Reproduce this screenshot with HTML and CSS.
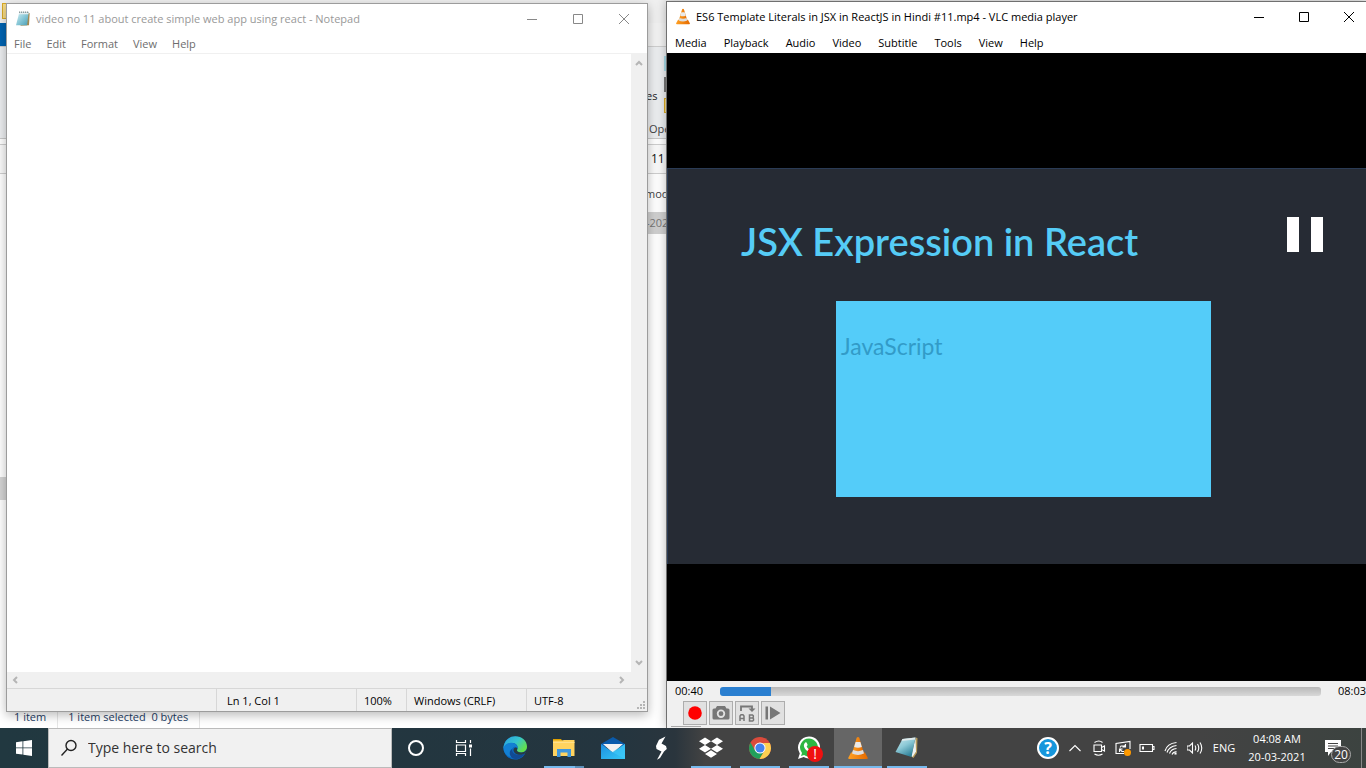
FILE: index.html
```html
<!DOCTYPE html>
<html lang="en">
<head>
<meta charset="utf-8">
<title>Desktop</title>
<link rel="stylesheet" href="styles.css">
</head>
<body>
<svg class="defs" aria-hidden="true">
  <defs>
    <linearGradient id="pad" x1="0" y1="0" x2="1" y2="1"><stop offset="0" stop-color="#d5f1f6"/><stop offset=".6" stop-color="#7cc0d1"/><stop offset="1" stop-color="#4b9cb3"/></linearGradient>
    <linearGradient id="pad2" x1="0" y1="0" x2=".6" y2="1"><stop offset="0" stop-color="#cfeaf0"/><stop offset=".5" stop-color="#8cc9d6"/><stop offset="1" stop-color="#2f8199"/></linearGradient>
    <linearGradient id="edge1" x1="0" y1="0" x2="1" y2=".6"><stop offset="0" stop-color="#2a9fe0"/><stop offset=".55" stop-color="#35c4cf"/><stop offset="1" stop-color="#63e04a"/></linearGradient>
    <linearGradient id="mail1" x1="0" y1="0" x2="1" y2="1"><stop offset="0" stop-color="#1d8fe0"/><stop offset="1" stop-color="#35c8f7"/></linearGradient>
    <linearGradient id="cone1" x1="0" y1="0" x2="1" y2="0"><stop offset="0" stop-color="#ffa022"/><stop offset="1" stop-color="#e46a00"/></linearGradient>
    <symbol id="cone" viewBox="0 0 24 26">
      <path d="M4.500 18h15l3 5.500q.4 1.500-1.200 1.500H2.700Q1.100 25 1.500 23.500Z" fill="url(#cone1)"/>
      <path d="M10.600 2q1.400-1.800 2.800 0l5.400 18q-6.800 4-13.600 0Z" fill="url(#cone1)"/>
      <path d="M9.400 6.500h5.200l1.600 5.300q-4.200 1.800-8.400 0Z" fill="#e9e9e9"/>
      <path d="M6.600 15.300q5.400 2.200 10.800 0l1.100 3.700q-6.500 3.200-13 0Z" fill="#dedede"/>
    </symbol>
    <symbol id="notepad" viewBox="0 0 24 24">
      <path d="M20 3l2 1-1 18-13 1Z" fill="#a38a52"/>
      <path d="M6.500 2.500h14L18 22H1.500Z" fill="url(#pad)"/>
      <path d="M6.500 2.500h14l-.4 3H5.700Z" fill="#e4eef0"/>
      <path d="M7 1.500v2M10 1.500v2M13 1.500v2M16 1.500v2M19 1.500v2" stroke="#4a5a5c" stroke-width="1.200"/>
    </symbol>
  </defs>
</svg>

<main class="desktop">
  <section class="explorer" aria-label="File Explorer">
    <div class="ex-title"><span class="ex-folder"></span></div>
    <div class="ex-tabs"></div>
    <div class="ex-ribbon"><span class="ex-es">es</span><span class="ex-icons"><i class="glass"></i><i class="grey"></i><i class="gold"></i></span><span class="ex-open">Open</span></div>
    <div class="ex-address">11</div>
    <div class="ex-head">mod</div>
    <div class="ex-row">-202</div>
    <div class="ex-list"><span class="ex-mark"></span></div>
    <footer class="ex-status"><span>1 item</span><span>1 item selected&nbsp; 0 bytes</span></footer>
  </section>

  <section class="window notepad" aria-label="Notepad">
    <header class="titlebar">
      <svg class="app-icon" viewBox="0 0 24 24"><use href="#notepad"/></svg>
      <h1 class="win-title">video no 11 about create simple web app using react - Notepad</h1>
      <div class="controls">
        <button aria-label="Minimize"><svg viewBox="0 0 12 12"><path d="M1 6.500h10"/></svg></button>
        <button aria-label="Maximize"><svg viewBox="0 0 12 12"><path d="M1.500 1.500h9v9h-9z"/></svg></button>
        <button aria-label="Close"><svg viewBox="0 0 12 12"><path d="M1 1l10 10M11 1L1 11"/></svg></button>
      </div>
    </header>
    <nav class="menu"><button>File</button><button>Edit</button><button>Format</button><button>View</button><button>Help</button></nav>
    <div class="editor">
      <textarea class="paper" aria-label="Text editor"></textarea>
      <div class="vscroll"><svg viewBox="0 0 8 6"><path d="M1 5l3-3 3 3"/></svg><svg viewBox="0 0 8 6"><path d="M1 1l3 3 3-3"/></svg></div>
      <div class="hscroll"><svg viewBox="0 0 6 8"><path d="M5 1L2 4l3 3"/></svg><svg viewBox="0 0 6 8"><path d="M1 1l3 3-3 3"/></svg></div>
    </div>
    <footer class="np-status">
      <span class="st-empty"></span><span class="st-pos">Ln 1, Col 1</span><span class="st-zoom">100%</span><span class="st-eol">Windows (CRLF)</span><span class="st-enc">UTF-8</span>
      <svg class="grip" viewBox="0 0 8 8"><path d="M6 0h2v2H6zM3 3h2v2H3zM6 3h2v2H6zM0 6h2v2H0zM3 6h2v2H3zM6 6h2v2H6z"/></svg>
    </footer>
  </section>

  <section class="window vlc" aria-label="VLC media player">
    <header class="titlebar">
      <svg class="app-icon" viewBox="0 0 24 26"><use href="#cone"/></svg>
      <h1 class="win-title">ES6 Template Literals in JSX in ReactJS in Hindi #11.mp4 - VLC media player</h1>
      <div class="controls">
        <button aria-label="Minimize"><svg viewBox="0 0 12 12"><path d="M1 6.500h10"/></svg></button>
        <button aria-label="Maximize"><svg viewBox="0 0 12 12"><path d="M1.500 1.500h9v9h-9z"/></svg></button>
        <button aria-label="Close"><svg viewBox="0 0 12 12"><path d="M1 1l10 10M11 1L1 11"/></svg></button>
      </div>
    </header>
    <nav class="menu"><button>Media</button><button>Playback</button><button>Audio</button><button>Video</button><button>Subtitle</button><button>Tools</button><button>View</button><button>Help</button></nav>
    <div class="video">
      <div class="slide">
        <h2 class="slide-title">JSX Expression in React</h2>
        <div class="slide-box">JavaScript</div>
        <div class="paused"><i></i><i></i></div>
      </div>
    </div>
    <footer class="player">
      <div class="seek"><span>00:40</span><input type="range" min="0" max="483" value="40" aria-label="Seek"><span>08:03</span></div>
      <div class="tools">
        <button aria-label="Record"><svg viewBox="0 0 22 22"><circle cx="11" cy="11" r="6.800" fill="#f00"/></svg></button>
        <button aria-label="Snapshot"><svg viewBox="0 0 22 22"><path fill="#777" fill-rule="evenodd" d="M7 4h8l1.500 2.500H18q1.500 0 1.500 1.500v8q0 1.500-1.500 1.500H4Q2.500 17.500 2.500 16V8Q2.500 6.500 4 6.500h1.500zM11 7.500a4.200 4.200 0 1 0 0 8.400 4.200 4.200 0 0 0 0-8.400zm0 1.800a2.400 2.400 0 1 1 0 4.800 2.400 2.400 0 0 1 0-4.800z"/></svg></button>
        <button aria-label="Loop from A to B"><svg viewBox="0 0 22 22"><path fill="none" stroke="#777" stroke-width="1.800" d="M5 9V4.500h11V7"/><path fill="#777" d="M12.500 6.500h7L16 10z"/><path fill="none" stroke="#777" stroke-width="1.500" d="M4 19v-5l1-1.200h2L8 14v5M4 16.500h4M13.500 13h3l.8.8v1.400l-.8.800h-3zM13.500 16h3.200l.8.800v1.400l-.8.800h-3.200z"/></svg></button>
        <button aria-label="Frame by frame"><svg viewBox="0 0 22 22"><path fill="#777" d="M3.500 4.500h2.500v13H3.500zM8 4.500l10.500 6.500L8 17.500z"/></svg></button>
      </div>
      <div class="player-edge"></div>
    </footer>
  </section>
</main>

<footer class="taskbar">
  <button class="start" aria-label="Start"><svg viewBox="0 0 16 16"><path fill="#fff" d="M0 2.200L6.500 1.300v6.200H0zM7.300 1.200L16 0v7.500H7.300zM0 8.300h6.500v6.200L0 13.700zM7.300 8.300H16V16l-8.700-1.200z"/></svg></button>
  <label class="search"><svg viewBox="0 0 18 18"><circle cx="11" cy="6.500" r="5" /><path d="M7.500 10L1.500 16.500"/></svg><input type="text" placeholder="Type here to search" aria-label="Type here to search"></label>
  <div class="quick">
    <button aria-label="Cortana"><svg viewBox="0 0 24 24"><circle cx="12" cy="12" r="7" fill="none" stroke="#fff" stroke-width="2"/></svg></button>
    <button aria-label="Task View"><svg viewBox="0 0 24 24" fill="none" stroke="#fff" stroke-width="1.200"><path d="M4.500 4v2.500h9V4M4.500 9h9v6.500h-9zM4.500 20v-2.500h9V20M18.500 4v3M18.500 12.500V20"/><path d="M17 8.500h3v3h-3z" fill="#fff" stroke="none"/></svg></button>
  </div>
  <div class="tasks">
    <button aria-label="Microsoft Edge"><svg viewBox="0 0 24 24"><circle cx="12" cy="12" r="11.500" fill="#0b66bd"/><path d="M.6 10.500C2 3.500 7 .3 12.300.3 19 .3 24 5 24 10.500c0 4-3 6-6.300 6-3 0-4.700-1-3.500-2.800C16 10 13 7 9.500 7 6 7 2.500 8.500.6 12.500Z" fill="url(#edge1)"/><path d="M.5 12C1.500 8.500 5 6.800 8 6.800c3.600 0 6.500 2.500 6.400 5.700-.5-1.500-2-2.300-3.500-1.600C7.500 12.500 8 18 12.500 20.500c-4 2.500-12-1-12-8.500Z" fill="#1380d3"/><path d="M9 13c-.5 5 6 8 12.800 4.500C18.500 24 9 25 7 19c-.7-2.500 0-5 2-6Z" fill="#114a93"/><path d="M14.400 12.500c-.4 1-.9 2 .4 3 2.500 1.800 7.500 1.200 9-2.500-.2 2-1 3.500-2 4.500-6 3-11 0-11.300-3.300 0-2.200 2.600-3.700 3.900-1.700Z" fill="#263a44"/></svg></button>
    <button class="open many" aria-label="File Explorer"><svg viewBox="0 0 24 24"><path d="M1 3h8l1.500 2H1z" fill="#e0a000"/><path d="M1 4.500h9L12 4h10.500v16H1z" fill="#ffd35f"/><path d="M1 6h21.500v1H1z" fill="#ffe08a"/><path d="M5 21v-8h14v8h-3.500v-4.500h-7V21z" fill="#3f97dd"/></svg></button>
    <button aria-label="Mail"><svg viewBox="0 0 24 24"><path d="M0 8L12 1l12 7v3H0z" fill="#0a5bab"/><path d="M2 8h20l-10 9z" fill="#f2f2f2"/><path d="M0 8l12 8.500L24 8v15H0z" fill="url(#mail1)"/><path d="M24 8v15L11 16z" fill="#41c9f8" opacity=".6"/></svg></button>
    <button aria-label="Shortcut app"><svg viewBox="0 0 24 24"><path fill="#fff" d="M15.500.5L9 3.800 6 10l.5 3 5 2.500-4.500 8.300 3-1.800 4-6.500 2.800-2.500-.8-3-4.500-2.500Z"/></svg></button>
    <button class="open" aria-label="Dropbox"><svg viewBox="0 0 24 24"><path fill="#fff" d="M6 1.500l6 3.700-6 3.700-6-3.700zM18 1.500l6 3.700-6 3.700-6-3.700zM6 9l6 3.700-6 3.700L0 12.700zM18 9l6 3.700-6 3.700-6-3.700zM12 14.300l6 3.700-6 3.800L6 18z"/></svg></button>
    <button class="open" aria-label="Google Chrome"><svg viewBox="0 0 24 24"><circle cx="12" cy="12" r="11" fill="#da4b3c"/><path d="M2.500 6.500A11 11 0 0 0 11.500 23l5-8.300-9.500-.200Z" fill="#21a05b"/><path d="M21.800 7A11 11 0 0 1 11.500 23l5-8.300c1.400-2.500.8-5.700-1.500-7.700Z" fill="#fdd052"/><circle cx="12" cy="12" r="5.600" fill="#fff"/><circle cx="12" cy="12" r="4.600" fill="#4482f0"/></svg></button>
    <button class="open wa" aria-label="WhatsApp"><svg viewBox="0 0 24 24"><path fill="#fff" d="M12 .5a11 11 0 1 1-5.300 20.600L1 23l1.800-5.600A11 11 0 0 1 12 .5Z"/><path fill="#2db742" d="M12 2.500a9 9 0 1 1-4.900 16.600L4 20.100l1-3.100A9 9 0 0 1 12 2.500Z"/><path fill="#fff" d="M8.300 6.500c.6-.4 1.200-.2 1.400.3l.9 2c.1.600-.8 1.200-.9 1.600.8 1.800 2.200 3 4 3.700.6-.200 1-1.300 1.600-1.200l2.200 1c.5.400 0 2-.8 2.600-1 .8-2.500.9-5-.4-2.500-1.400-4.200-3.700-4.700-5.500-.4-1.800.3-3.400 1.300-4.100Z"/></svg><span class="alert">!</span></button>
    <button class="open active" aria-label="VLC media player"><svg viewBox="0 0 24 26"><use href="#cone"/></svg></button>
    <button class="open" aria-label="Notepad"><svg viewBox="0 0 24 24"><path d="M21 1.500l1.500.8-.5 14.500-3.500 5.200-3-2Z" fill="#b59a5c"/><path d="M20.500 2l.5 13.500-3.500 5.500-1-1.500Z" fill="#eef2f2"/><path d="M7.500 3L20.500 1.500 16.500 21 .5 16Z" fill="url(#pad2)"/><path d="M7.500 3L20.500 1.500l-.5 2L6.500 5Z" fill="#dfe9ea"/></svg></button>
  </div>
  <div class="tray">
    <button class="help" aria-label="Help"><span>?</span></button>
    <button aria-label="Show hidden icons"><svg viewBox="0 0 16 16"><path d="M2.500 11L8 5.500l5.500 5.500"/></svg></button>
    <button aria-label="Meet Now"><svg viewBox="0 0 16 16"><path d="M3.500 2.500Q8-.5 11.500 2.500M3.500 14q4 2.500 8 0M3 5h7.500v6.500H3zM10.500 7.500l3-1.500v5l-3-1.500"/></svg></button>
    <button class="sync" aria-label="Updates"><svg viewBox="0 0 16 16"><path d="M9 13.500H1V3.500l14-2V9M5 7.500l1-1.500h3.500l1-1.500M10.500 4v3h-3M4.500 12V9h3M5 9.500l2 2h2"/><circle cx="12.500" cy="12.500" r="3.500"/></svg></button>
    <button aria-label="Battery"><svg viewBox="0 0 16 16"><path d="M1 4.500h12.500v7H1zM13.500 6.500H15v3h-1.500"/><path d="M3 6.500h2v3H3z" fill="#fff" stroke="none"/></svg></button>
    <button aria-label="Wi-Fi"><svg viewBox="0 0 16 16"><path d="M2 11Q4 3.500 13.500 2.500M4 12.500Q6 6.500 13.500 5.500M6.500 13.500Q8 9 13.500 8.500M9 14.500Q10 12 13.500 11.500"/><path d="M12 13h1v1h-1z" fill="#fff"/></svg></button>
    <button aria-label="Volume"><svg viewBox="0 0 16 16"><path d="M0 6h2.500l3-3v10l-3-3H0zM8 5.500q1.500 2.500 0 5M10.500 4q2.500 4 0 8M13 2.500q3.500 5.500 0 11"/></svg></button>
    <span class="lang">ENG</span>
    <div class="clock"><time>04:08 AM</time><time>20-03-2021</time></div>
    <button class="notes" aria-label="Notifications"><svg viewBox="0 0 16 16"><path d="M0 0h16v12H6l-3 4v-4H0z" fill="#fff" stroke="none"/><path d="M3 3.500h10M3 6h10M3 8.500h7" stroke="#444"/></svg><span class="count">20</span></button>
    <div class="peek"></div>
  </div>
</footer>
</body>
</html>
```
FILE: styles.css
```css
* { box-sizing: border-box; }
html, body { height: 100%; }
body {
  margin: 0;
  display: flex;
  flex-direction: column;
  overflow: hidden;
  font: 11px/16px "Open Sans", "Noto Sans", sans-serif;
  color: #000;
}
button { border: 0; margin: 0; padding: 0; background: none; font: inherit; color: inherit; }
h1, h2 { margin: 0; font-weight: 400; }
.defs { position: absolute; width: 0; height: 0; }
.desktop { position: relative; flex: 1; min-height: 0; overflow: hidden; }

/* Explorer, mostly hidden behind the other windows */
.explorer { height: 100%; display: flex; flex-direction: column; background: #fff; color: #444; }
.ex-title { height: 23px; padding: 3px 2px; background: #f0f0f0; }
.ex-folder { display: block; width: 16px; height: 16px; background: #f8dc86; border: 1px solid #d9aa27; }
.ex-tabs { height: 24px; background: linear-gradient(90deg, #0063b1 7px, #f3f3f3 7px); border-bottom: 1px solid #cfcfcf; }
.ex-ribbon { position: relative; height: 92px; padding: 41px 0 0 646px; background: #eceef0; border-bottom: 1px solid #c8c8c8; display: flex; flex-direction: column; gap: 17px; }
.ex-es { color: #222; }
.ex-open { padding-left: 3px; }
.ex-icons { position: absolute; left: 664px; top: 9px; display: flex; flex-direction: column; gap: 6px; }
.ex-icons i { width: 8px; height: 15px; }
.glass { background: #a8dbe8; }
.grey { background: #777; }
.gold { background: #f8dc86; border: 1px solid #d9aa27; }
.ex-address { height: 30px; margin-top: 5px; padding: 6px 0 0 651px; color: #111; font-size: 12px; background: #fafafa; border: 1px solid #cfcfcf; border-width: 1px 0; }
.ex-head { padding: 12px 0 10px 645px; color: #444; }
.ex-row { padding: 3px 0 3px 646px; background: linear-gradient(90deg, #fff 640px, #d0d0d0 640px); color: #777; }
.ex-list { flex: 1; padding-top: 243px; }
.ex-mark { display: block; width: 7px; height: 23px; background: #d4d4d4; }
.ex-status { display: flex; height: 22px; padding-left: 4px; line-height: 22px; color: #1c3c64; }
.ex-status span { padding: 0 11px 0 10px; border-right: 1px solid #e6e6e6; }

.window { position: absolute; display: flex; flex-direction: column; background: #fff; }
.titlebar { display: flex; align-items: center; height: 29px; }
.app-icon { width: 16px; height: 17px; }
.win-title { flex: 1; font-size: 11px; line-height: 16px; white-space: nowrap; }
.controls { display: flex; }
.controls button { width: 46px; height: 28px; display: grid; place-items: center; }
.controls svg { width: 12px; height: 12px; fill: none; stroke: currentColor; }
.menu { display: flex; height: 20px; align-items: center; }

.notepad { left: 6px; top: 3px; width: 642px; bottom: 16px; border: 1px solid #9c9c9c; color: #999; box-shadow: 0 3px 10px rgba(0, 0, 0, .28); }
.notepad .app-icon { margin: 0 5px 0 8px; }
.notepad .controls { color: #888; }
.notepad .menu { gap: 15px; padding: 1px 0 0 7px; color: #6d6d6d; }
.editor { flex: 1; display: grid; grid-template: 1fr 16px / 1fr 16px; background: #f0f0f0; border-top: 1px solid #f0f0f0; min-height: 0; }
.paper { border: 0; outline: 0; resize: none; background: #fff; padding: 2px; overflow: hidden; }
.vscroll, .hscroll { display: flex; justify-content: space-between; align-items: center; }
.vscroll { flex-direction: column; padding: 6px 0; }
.hscroll { padding: 0 6px 0 5px; }
.editor svg { fill: none; stroke: #b5b5b5; stroke-width: 2; }
.vscroll svg { width: 8px; height: 6px; }
.hscroll svg { width: 6px; height: 8px; }
.np-status { display: flex; height: 23px; line-height: 23px; color: #000; background: #f0f0f0; border-top: 1px solid #d7d7d7; }
.np-status span { border-right: 1px solid #d7d7d7; }
.st-empty { width: 210px; }
.st-pos { width: 140px; padding-left: 10px; }
.st-zoom { width: 50px; padding-left: 7px; }
.st-eol { width: 120px; padding-left: 7px; }
.np-status .st-enc { flex: 1; padding-left: 7px; border: 0; }
.grip { width: 8px; height: 8px; margin: 12px 2px 0 0; fill: #b5b5b5; }

.vlc { left: 666px; top: 1px; right: 0; bottom: 0; border: 1px solid #707070; border-width: 1px 0 0 1px; box-shadow: 0 0 10px rgba(0, 0, 0, .28); overflow: hidden; }
.vlc .app-icon { margin: 0 5px 0 8px; }
.vlc .controls { margin-right: -5px; }
.vlc .controls button { width: 45px; }
.vlc .menu { gap: 17px; padding: 2px 0 0 8px; height: 22px; }
.video { flex: 1; min-height: 0; display: flex; align-items: center; padding-bottom: 2px; background: #000; }
.slide { position: relative; width: 100%; aspect-ratio: 699 / 396; padding: 48px 0 0 73px; background: #262b34; border: 1px solid #2a3b55; border-width: 1px 0 0 1px; }
.slide-title { font: 600 38px/48px Lato, sans-serif; color: #55ccf6; white-space: nowrap; }
.slide-box { margin: 36px 0 0 95px; width: 375px; height: 196px; padding: 29px 5px; background: #54ccf9; color: #329bc8; font: 23px/32px Lato, sans-serif; }
.paused { position: absolute; right: 43px; top: 48px; display: flex; gap: 12px; }
.paused i { width: 12px; height: 35px; background: #fff; }
.player { height: 47px; background: #f0f0f0; }
.seek { display: flex; align-items: center; gap: 17px; padding: 1px 0 0 8px; height: 19px; }
.seek input { appearance: none; flex: 1; height: 9px; margin: 0; border-radius: 3px; background: linear-gradient(90deg, #2a7fd0 51px, transparent 51px), linear-gradient(#b8b8b8, #d8d8d8); }
.seek input::-webkit-slider-thumb { appearance: none; width: 1px; height: 9px; opacity: 0; }
.tools { display: flex; gap: 2px; padding: 1px 0 0 16px; }
.tools button { width: 24px; height: 24px; border: 1px solid #adadad; background: #e1e1e1; display: grid; }
.tools svg { width: 22px; height: 22px; }
.player-edge { width: 30px; height: 1px; margin: 1px 0 0 4px; background: #a8a8a8; }

.taskbar { display: flex; height: 40px; color: #fff; background: linear-gradient(90deg, #213840 0, #24353f 620px, #2a353d 675px, #434343 705px, #434343 1200px, #3c4340 100%); }
.taskbar button { display: grid; place-items: center; position: relative; height: 40px; }
.start { width: 48px; }
.start svg { width: 16px; height: 16px; }
.search { display: flex; align-items: center; width: 344px; padding-left: 11px; gap: 10px; background: #f1f1f1; border: 1px solid #bbb; }
.search svg { width: 18px; height: 18px; fill: none; stroke: #222; stroke-width: 1.4px; }
.search input { flex: 1; min-width: 0; padding: 0; border: 0; outline: 0; background: none; font: 14px/20px "Open Sans", "Noto Sans", sans-serif; color: #333; }
.search input::placeholder { color: #333; opacity: 1; }
.quick { display: flex; margin-right: 3px; }
.quick button, .tasks button { width: 48px; }
.quick svg, .tasks svg { width: 24px; height: 24px; }
.tasks { display: flex; gap: 1px; flex: 1; }
.tasks .open::after { content: ""; position: absolute; left: 4px; right: 4px; bottom: 0; height: 2px; background: #76b9ed; }
.tasks .many::after { background: linear-gradient(90deg, #76b9ed 31px, #5c8fb8 31px); }
.tasks .active { background: #666; }
.tasks .active::after { left: 0; right: 0; }
.alert { position: absolute; left: 22px; top: 18px; width: 16px; height: 16px; border-radius: 50%; background: #f01010; font-size: 14px; line-height: 16px; }
.tray { display: flex; align-items: center; }
.tray button { width: 24px; }
.tray svg { width: 16px; height: 16px; fill: none; stroke: #fff; stroke-width: 1.1px; }
.sync circle { fill: #ff9a00; stroke: none; }
.tray .help { width: 30px; }
.help span { width: 22px; height: 22px; border: 2px solid #fff; border-radius: 50%; background: #1596dc; font-size: 16px; font-weight: 700; line-height: 18px; }
.lang { width: 34px; text-align: center; }
.clock { width: 72px; display: grid; gap: 2px; text-align: center; }
.tray .notes { width: 48px; padding-right: 8px; }
.count { position: absolute; left: 18px; top: 18px; width: 20px; height: 17px; border: 1px solid #aaa; border-radius: 9px; background: #444; font-size: 12px; line-height: 15px; }
.peek { width: 5px; height: 40px; border-left: 1px solid #888; }
```
